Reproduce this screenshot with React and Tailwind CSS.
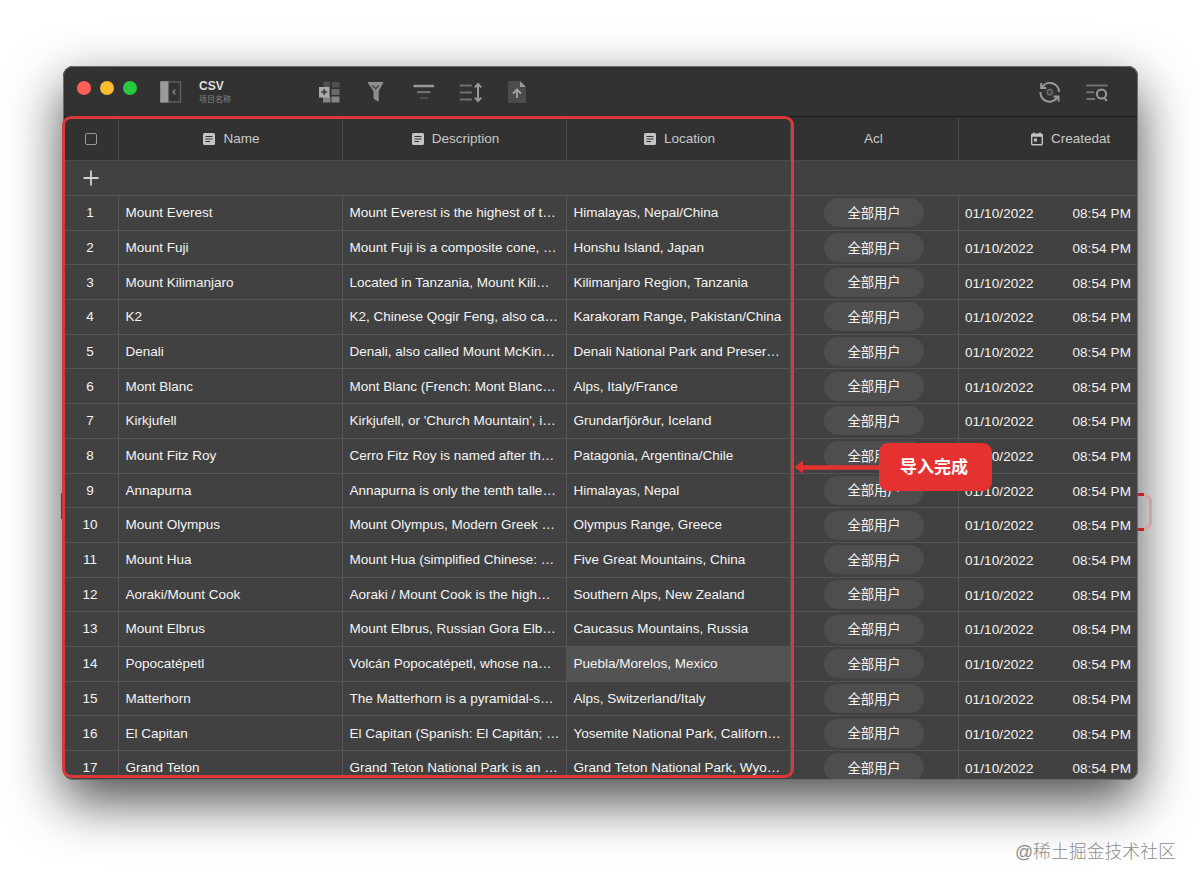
const mountains = [
  ["Mount Everest", "Mount Everest is the highest of t…", "Himalayas, Nepal/China"],
  ["Mount Fuji", "Mount Fuji is a composite cone, …", "Honshu Island, Japan"],
  ["Mount Kilimanjaro", "Located in Tanzania, Mount Kili…", "Kilimanjaro Region, Tanzania"],
  ["K2", "K2, Chinese Qogir Feng, also ca…", "Karakoram Range, Pakistan/China"],
  ["Denali", "Denali, also called Mount McKin…", "Denali National Park and Preser…"],
  ["Mont Blanc", "Mont Blanc (French: Mont Blanc…", "Alps, Italy/France"],
  ["Kirkjufell", "Kirkjufell, or 'Church Mountain', i…", "Grundarfjörður, Iceland"],
  ["Mount Fitz Roy", "Cerro Fitz Roy is named after th…", "Patagonia, Argentina/Chile"],
  ["Annapurna", "Annapurna is only the tenth talle…", "Himalayas, Nepal"],
  ["Mount Olympus", "Mount Olympus, Modern Greek …", "Olympus Range, Greece"],
  ["Mount Hua", "Mount Hua (simplified Chinese: …", "Five Great Mountains, China"],
  ["Aoraki/Mount Cook", "Aoraki / Mount Cook is the high…", "Southern Alps, New Zealand"],
  ["Mount Elbrus", "Mount Elbrus, Russian Gora Elb…", "Caucasus Mountains, Russia"],
  ["Popocatépetl", "Volcán Popocatépetl, whose na…", "Puebla/Morelos, Mexico"],
  ["Matterhorn", "The Matterhorn is a pyramidal-s…", "Alps, Switzerland/Italy"],
  ["El Capitan", "El Capitan (Spanish: El Capitán; …", "Yosemite National Park, Californ…"],
  ["Grand Teton", "Grand Teton National Park is an …", "Grand Teton National Park, Wyo…"],
];

const grid = "grid grid-cols-[56px_224px_224px_224px_168px_179px]";

function TextIcon() {
  return (
    <svg width="12" height="12" viewBox="0 0 12 12" className="shrink-0">
      <rect width="12" height="12" rx="1.5" fill="#c4c4c4" />
      <path d="M2.5 3.5h7M2.5 6h7M2.5 8.5h4.5" stroke="#333" strokeWidth="1.2" />
    </svg>
  );
}

function CalendarIcon() {
  return (
    <svg width="12" height="14" viewBox="0 0 12 14" className="shrink-0">
      <rect x="0.7" y="2.2" width="10.6" height="10.6" rx="1" fill="none" stroke="#c4c4c4" strokeWidth="1.4" />
      <path d="M0.5 2h11v2.8H.5zM2.2.5h1.6V3H2.2zM8.2.5h1.6V3H8.2zM3 6.5h3v3H3z" fill="#c4c4c4" />
    </svg>
  );
}

function Toolbar() {
  return (
    <div className="flex h-[51px] shrink-0 items-start border-b border-[#1c1c1c] bg-[#323232]">
      <div className="flex gap-[9px] pt-[15px] pl-[14px]">
        <span className="size-[14px] rounded-full bg-[#ff5f57]" />
        <span className="size-[14px] rounded-full bg-[#febc2e]" />
        <span className="size-[14px] rounded-full bg-[#28c840]" />
      </div>
      <svg width="22" height="22" viewBox="0 0 22 22" className="mt-[15px] ml-[23px]">
        <rect x="1" y="1" width="19.5" height="20" fill="none" stroke="#606060" strokeWidth="1.4" />
        <path d="M.3.3h8.2v21.2H.3z" fill="#9a9a9a" />
        <path d="M15.3 8.5l-2.3 2.4 2.3 2.4" fill="none" stroke="#888" strokeWidth="1.4" />
      </svg>
      <div className="mt-[13px] ml-[17px] w-[100px]">
        <p className="text-[12px] leading-[15px] font-bold text-[#dedede]">CSV</p>
        <p className="text-[8px] leading-[12px] text-[#858585]">项目名称</p>
      </div>

      <svg width="22" height="22" viewBox="0 0 22 22" className="mt-[16px] ml-[20px]">
        <path d="M4.5 0h6.500v5H4.500zM13 0h7.500v5.500H13z" fill="#515151" />
        <path d="M12.500 7h8v6h-8z" fill="#696969" />
        <path d="M4 15h7.500v5.500H4zM12.500 14.500h8v6h-8z" fill="#848484" />
        <path d="M0 5h10.500v10.500H0z" fill="#ababab" />
        <path d="M5.200 7v6M2.200 10h6" stroke="#3a3a3a" strokeWidth="1.700" />
      </svg>
      <svg width="18" height="22" viewBox="0 0 18 22" className="mt-[15px] ml-[26px]">
        <path d="M1 1.500h15L11.200 10v10L7 17.500V10z" fill="#8e8e8e" stroke="#8e8e8e" strokeLinejoin="round" />
        <path d="M5.300 4.500l3.300 3.200 3.300-3.200" fill="none" stroke="#484848" strokeWidth="1.500" />
      </svg>
      <svg width="22" height="20" viewBox="0 0 22 20" className="mt-[16px] ml-[28px]">
        <path d="M1.500 4h18.500" stroke="#999" strokeWidth="2.400" strokeLinecap="round" />
        <path d="M5 10.200h11.500" stroke="#707070" strokeWidth="2.200" strokeLinecap="round" />
        <path d="M7.500 16.200h6.500" stroke="#505050" strokeWidth="2.200" strokeLinecap="round" />
      </svg>
      <svg width="24" height="22" viewBox="0 0 24 22" className="mt-[15px] ml-[24px]">
        <path d="M1.500 4.500h10.500M1.500 11.500h10.500M1.500 18.500h10.500" stroke="#707070" strokeWidth="2" strokeLinecap="round" />
        <path d="M19 3v17M16.300 5.800l2.700-3 2.700 3M16.300 17.200l2.700 3 2.700-3" fill="none" stroke="#999" strokeWidth="2" strokeLinecap="round" strokeLinejoin="round" />
      </svg>
      <svg width="20" height="24" viewBox="0 0 20 24" className="mt-[14px] ml-[24px]">
        <path d="M2.500 1H13l6 6v14.500a1.500 1.500 0 0 1-1.500 1.500h-15A1.500 1.500 0 0 1 1 21.500v-19A1.500 1.500 0 0 1 2.500 1z" fill="#4c4c4c" />
        <path d="M13 1l6 6h-6z" fill="#999" />
        <path d="M10 18V9.500M6 13.500L10 9.500l4 4" fill="none" stroke="#a3a3a3" strokeWidth="1.800" />
      </svg>

      <div className="mt-[16px] mr-[29px] ml-auto flex gap-[25px]">
        <svg width="22" height="22" viewBox="0 0 22 22">
          <path d="M3 5.800A9 9 0 0 1 20 10M18.500 14.700A9 9 0 0 1 1.500 10M2.200 1v5h5M19.500 19.500v-5h-5" fill="none" stroke="#999" strokeWidth="2" />
          <circle cx="10.800" cy="10.200" r="2.600" fill="#3e3e3e" stroke="#6a6a6a" strokeWidth="1.500" />
        </svg>
        <svg width="23" height="22" viewBox="0 0 23 22">
          <path d="M.5 3.500h21M.5 10.200h7.500M.5 17h8.500" stroke="#737373" strokeWidth="1.900" />
          <circle cx="15.500" cy="12" r="4.600" fill="none" stroke="#999" strokeWidth="2" />
          <path d="M18.200 15.500l2.500 3.500" stroke="#999" strokeWidth="2" />
        </svg>
      </div>
    </div>
  );
}

function TableHead() {
  const cell = "flex items-center justify-center border-r border-[#484848]";
  return (
    <div className={`${grid} h-[43px] shrink-0 bg-[#323232] pt-px text-[13.5px] text-[#c8c8c8]`}>
      <div className={cell}>
        <span className="size-[12px] rounded-[2px] border-[1.5px] border-[#999]" />
      </div>
      <div className={`${cell} gap-[8px] pl-[2px]`}>
        <TextIcon />
        Name
      </div>
      <div className={`${cell} gap-[8px] pl-[2px]`}>
        <TextIcon />
        Description
      </div>
      <div className={`${cell} gap-[8px] pl-[2px]`}>
        <TextIcon />
        Location
      </div>
      <div className={`${cell} pr-[2px]`}>Acl</div>
      <div className="flex items-center gap-[8px] pl-[72px]">
        <CalendarIcon />
        Createdat
      </div>
    </div>
  );
}

function Row({ index, item }) {
  const cell = "flex items-center border-r border-[#555] pt-px pl-[6.5px] whitespace-nowrap";
  return (
    <div className={`${grid} h-[34.7px] shrink-0 border-t border-[#555] text-[13.5px] text-[#f4f4f4]`}>
      <div className="flex items-center justify-center border-r border-[#555] pt-px pr-px">{index + 1}</div>
      <div className={cell}>{item[0]}</div>
      <div className={cell}>{item[1]}</div>
      <div className={index === 13 ? `${cell} bg-[#535353]` : cell}>{item[2]}</div>
      <div className="flex items-center justify-center border-r border-[#555] pr-px">
        <span className="flex h-[29px] w-[100px] items-center justify-center rounded-full bg-[#4e4e4e] pt-[2px] text-[13.3px]">
          全部用户
        </span>
      </div>
      <div className="flex items-center justify-between pt-[3px] pr-[7px] pl-[6px] tracking-[0.1px]">
        <span>01/10/2022</span>
        <span>08:54 PM</span>
      </div>
    </div>
  );
}

export default function App() {
  return (
    <div className="relative h-[886px] w-[1200px] overflow-hidden bg-white pt-[66px] pl-[63px] font-['Liberation_Sans','Noto_Sans_CJK_SC',sans-serif]">
      <div className="relative flex h-[714px] w-[1075px] flex-col overflow-hidden rounded-[10px] bg-[#414141] shadow-[0_21px_54px_rgba(0,0,0,0.7)]">
        <Toolbar />
        <TableHead />
        <div className="flex h-[35px] shrink-0 items-center border-t border-[#4a4a4a] pl-[20px]">
          <svg width="16" height="16" viewBox="0 0 16 16">
            <path d="M8 .5v15M.5 8h15" stroke="#d2d2d2" strokeWidth="1.800" />
          </svg>
        </div>
        {mountains.map((item, i) => (
          <Row key={i} index={i} item={item} />
        ))}
        <div className="absolute inset-0 rounded-[10px] border border-[#6c6c6c]" />
      </div>

      {/* ends of the outline that runs behind the window */}
      <div className="absolute top-[493px] left-[61px] h-[26px] w-[2px] bg-[#7d2a2d]" />
      <div className="absolute top-[493px] left-[1138px] h-[38px] w-[14px] rounded-r-[9px] border-[3px] border-l-0 border-[#d6a0a3]" />
      <div className="absolute top-[493px] left-[1138px] h-[38px] w-[6px] border-y-[3px] border-[#b3242b]" />

      {/* red marker around the imported columns */}
      <div className="absolute top-[116px] left-[62px] h-[662px] w-[732px] rounded-[9px] border-[3.5px] border-[#dc3739]" />
      <svg width="88" height="14" viewBox="0 0 88 14" className="absolute top-[460px] left-[794px]">
        <path d="M.5 7l8.500-6.500v13z" fill="#e63131" />
        <path d="M7 7.500h81" stroke="#e63131" strokeWidth="4.500" />
      </svg>
      <div className="absolute top-[443px] left-[879px] flex h-[48px] w-[113px] items-center justify-center rounded-[9px] bg-[#e63131] pt-[2px] pr-[3px] text-[17px] font-bold text-white">
        导入完成
      </div>

      <p className="absolute top-[839px] left-[1015px] text-[17.85px] leading-[27px] font-light whitespace-nowrap text-[#8d8d8d]">
        @稀土掘金技术社区
      </p>
    </div>
  );
}
